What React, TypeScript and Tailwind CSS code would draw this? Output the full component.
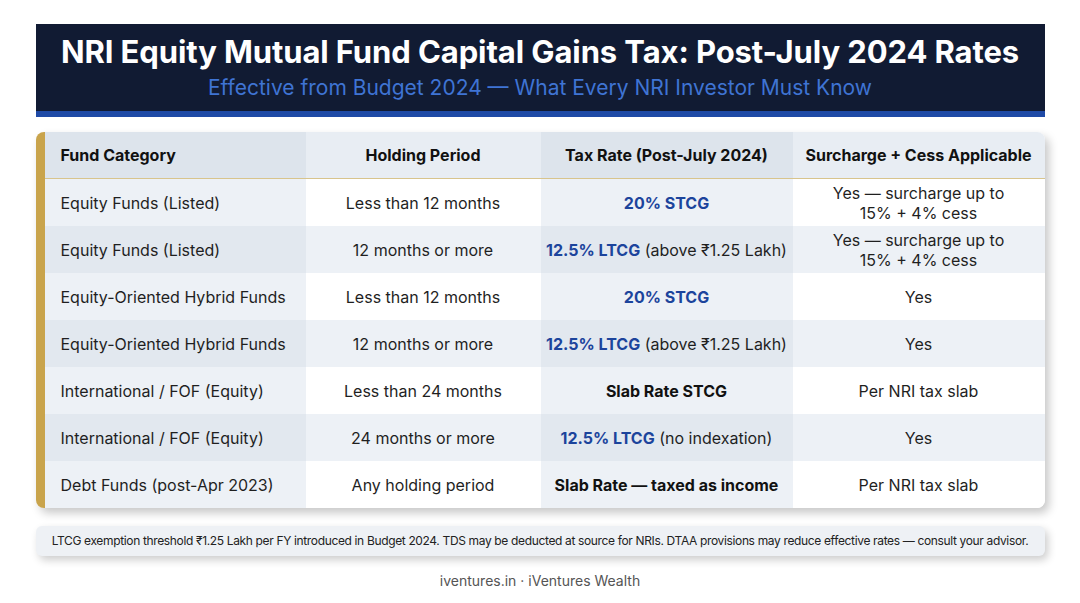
import React from 'react'

type Row = {
  category: string
  period: string
  rate: React.ReactNode
  surcharge: React.ReactNode
}

const twoLine = (
  <span className="leading-[20px]">
    Yes — surcharge up to
    <br />
    15% + 4% cess
  </span>
)

const rows: Row[] = [
  {
    category: 'Equity Funds (Listed)',
    period: 'Less than 12 months',
    rate: <span className="font-bold text-[#1c449c]">20% STCG</span>,
    surcharge: twoLine,
  },
  {
    category: 'Equity Funds (Listed)',
    period: '12 months or more',
    rate: (
      <span>
        <span className="font-bold text-[#1c449c]">12.5% LTCG</span> (above ₹1.25 Lakh)
      </span>
    ),
    surcharge: twoLine,
  },
  {
    category: 'Equity-Oriented Hybrid Funds',
    period: 'Less than 12 months',
    rate: <span className="font-bold text-[#1c449c]">20% STCG</span>,
    surcharge: 'Yes',
  },
  {
    category: 'Equity-Oriented Hybrid Funds',
    period: '12 months or more',
    rate: (
      <span>
        <span className="font-bold text-[#1c449c]">12.5% LTCG</span> (above ₹1.25 Lakh)
      </span>
    ),
    surcharge: 'Yes',
  },
  {
    category: 'International / FOF (Equity)',
    period: 'Less than 24 months',
    rate: <span className="font-bold text-[#111]">Slab Rate STCG</span>,
    surcharge: 'Per NRI tax slab',
  },
  {
    category: 'International / FOF (Equity)',
    period: '24 months or more',
    rate: (
      <span>
        <span className="font-bold text-[#1c449c]">12.5% LTCG</span> (no indexation)
      </span>
    ),
    surcharge: 'Yes',
  },
  {
    category: 'Debt Funds (post-Apr 2023)',
    period: 'Any holding period',
    rate: <span className="font-bold text-[#111]">Slab Rate — taxed as income</span>,
    surcharge: 'Per NRI tax slab',
  },
]

const headers = ['Fund Category', 'Holding Period', 'Tax Rate (Post-July 2024)', 'Surcharge + Cess Applicable']

export default function App() {
  return (
    <div
      className="w-[1080px] h-[603px] bg-white flex flex-col items-center pt-[24px] text-[#1a1a1a]"
      style={{ fontFamily: 'Inter, "Noto Sans", sans-serif' }}
    >
      {/* Title banner */}
      <div className="w-[1009px] h-[93px] bg-[#111b33] border-b-[6px] border-[#1f4aa6] flex flex-col items-center pt-[9px]">
        <h1 className="text-[31px] font-bold text-white leading-[38px] tracking-[-0.1px]">
          NRI Equity Mutual Fund Capital Gains Tax: Post-July 2024 Rates
        </h1>
        <p className="mt-[3px] text-[21px] text-[#3f74d4] leading-[28px]">
          Effective from Budget 2024 — What Every NRI Investor Must Know
        </p>
      </div>

      {/* Table */}
      <div className="mt-[15px] w-[1009px] rounded-[8px] overflow-hidden border-l-[9px] border-[#c9a44c] bg-white shadow-[4px_5px_10px_rgba(0,0,0,0.22)]">
        <div className="grid grid-cols-[261px_235px_252px_252px] h-[47px] border-b border-[#d8c48c] text-[16px] font-bold text-[#111]">
          {headers.map((h, i) => (
            <div
              key={h}
              className={`flex items-center ${i === 0 ? 'justify-start pl-[16px]' : 'justify-center'} ${
                i % 2 === 0 ? 'bg-[#dde4ec]' : 'bg-[#e8edf3]'
              }`}
            >
              {h}
            </div>
          ))}
        </div>
        {rows.map((r, ri) => {
          const even = ri % 2 === 1
          const cells = [r.category, r.period, r.rate, r.surcharge]
          return (
            <div key={ri} className="grid grid-cols-[261px_235px_252px_252px] h-[47px] text-[16px] text-[#1f1f1f]">
              {cells.map((c, ci) => {
                const tinted = ci % 2 === 0
                const bg = even
                  ? tinted
                    ? 'bg-[#e2e8ef]'
                    : 'bg-[#edf1f6]'
                  : tinted
                  ? 'bg-[#edf1f6]'
                  : 'bg-white'
                return (
                  <div
                    key={ci}
                    className={`flex items-center ${
                      ci === 0 ? 'justify-start pl-[16px]' : 'justify-center text-center'
                    } ${bg}`}
                  >
                    {c}
                  </div>
                )
              })}
            </div>
          )
        })}
      </div>

      {/* Footnote */}
      <div className="mt-[18px] w-[1009px] h-[30px] rounded-[6px] bg-[#eef1f5] shadow-[3px_4px_8px_rgba(0,0,0,0.2)] flex items-center justify-center whitespace-nowrap text-[12px] text-[#222] tracking-[-0.35px]">
        LTCG exemption threshold ₹1.25 Lakh per FY introduced in Budget 2024. TDS may be deducted at source for NRIs. DTAA
        provisions may reduce effective rates — consult your advisor.
      </div>

      <div className="mt-[14px] text-[14px] text-[#555]">iventures.in · iVentures Wealth</div>
    </div>
  )
}
